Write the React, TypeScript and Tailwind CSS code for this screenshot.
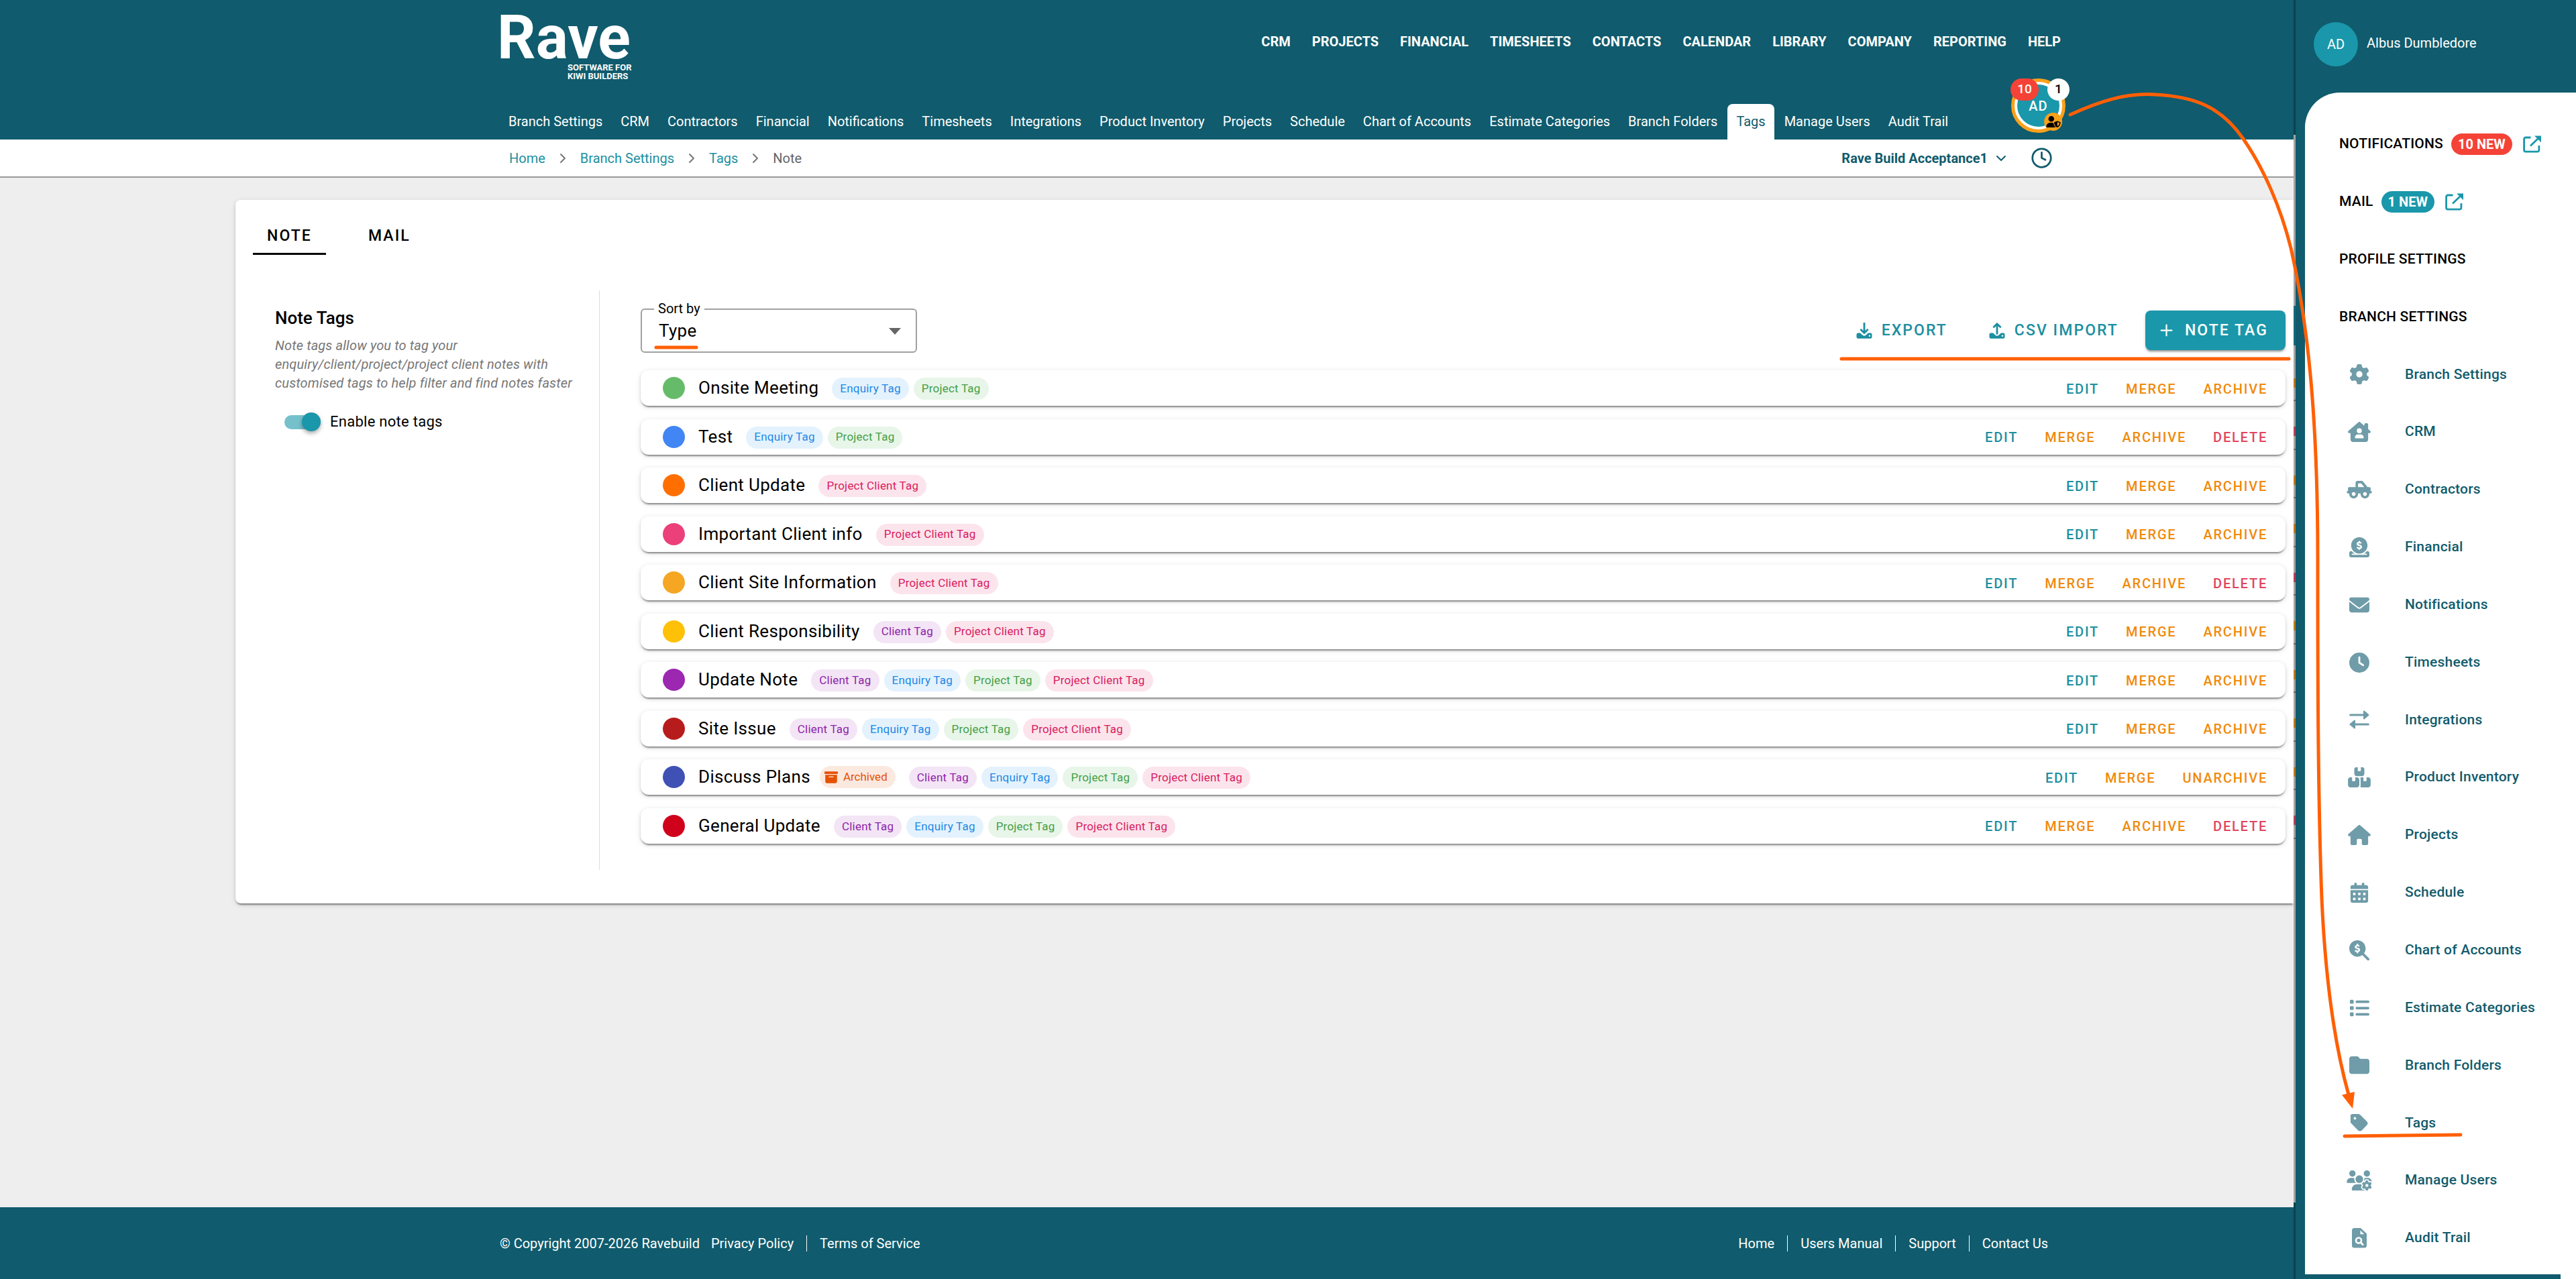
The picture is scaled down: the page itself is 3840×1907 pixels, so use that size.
import type { ReactNode } from 'react';
import { ChevronDown, ChevronRight, Clock, Plus } from 'lucide-react';
import {
  FaBoxArchive,
  FaBoxesStacked,
  FaCalendarDays,
  FaCircleDollarToSlot,
  FaClock,
  FaEnvelope,
  FaFolder,
  FaGear,
  FaHouse,
  FaHouseChimneyUser,
  FaList,
  FaMagnifyingGlassDollar,
  FaTag,
  FaTruckPickup,
  FaUserShield,
  FaUsersGear,
} from 'react-icons/fa6';

type TagType = 'client' | 'enquiry' | 'project' | 'projectClient';

interface NoteTag {
  name: string;
  dot: string;
  types: TagType[];
  archived?: boolean;
  deletable?: boolean;
}

const mainNav = ['CRM', 'PROJECTS', 'FINANCIAL', 'TIMESHEETS', 'CONTACTS', 'CALENDAR', 'LIBRARY', 'COMPANY', 'REPORTING', 'HELP'];

const subNav = [
  'Branch Settings', 'CRM', 'Contractors', 'Financial', 'Notifications', 'Timesheets', 'Integrations', 'Product Inventory',
  'Projects', 'Schedule', 'Chart of Accounts', 'Estimate Categories', 'Branch Folders', 'Tags', 'Manage Users', 'Audit Trail',
];

const tagTypes: Record<TagType, { label: string; style: string }> = {
  client: { label: 'Client Tag', style: 'bg-[#f3e5f5] text-[#8e24aa]' },
  enquiry: { label: 'Enquiry Tag', style: 'bg-[#e3f2fd] text-[#1e88e5]' },
  project: { label: 'Project Tag', style: 'bg-[#e8f5e9] text-[#43a047]' },
  projectClient: { label: 'Project Client Tag', style: 'bg-[#fce4ec] text-[#d81b60]' },
};

const allTypes: TagType[] = ['client', 'enquiry', 'project', 'projectClient'];

const noteTags: NoteTag[] = [
  { name: 'Onsite Meeting', dot: 'bg-[#66bb6a]', types: ['enquiry', 'project'] },
  { name: 'Test', dot: 'bg-[#4285f4]', types: ['enquiry', 'project'], deletable: true },
  { name: 'Client Update', dot: 'bg-[#ff6f00]', types: ['projectClient'] },
  { name: 'Important Client info', dot: 'bg-[#ec407a]', types: ['projectClient'] },
  { name: 'Client Site Information', dot: 'bg-[#f5a623]', types: ['projectClient'], deletable: true },
  { name: 'Client Responsibility', dot: 'bg-[#ffc107]', types: ['client', 'projectClient'] },
  { name: 'Update Note', dot: 'bg-[#9c27b0]', types: allTypes },
  { name: 'Site Issue', dot: 'bg-[#b71c1c]', types: allTypes },
  { name: 'Discuss Plans', dot: 'bg-[#3f51b5]', types: allTypes, archived: true },
  { name: 'General Update', dot: 'bg-[#d0021b]', types: allTypes, deletable: true },
];

function SwapIcon() {
  return (
    <svg viewBox="0 0 30 30" fill="currentColor" stroke="currentColor" strokeLinecap="round" strokeLinejoin="round">
      <path d="M1.700 8H22M8 22h20.300" strokeWidth="3.200" />
      <path d="M22 2.500v11l6.500-5.500zM8 16.500v11L1.500 22z" strokeWidth="2" />
    </svg>
  );
}

function AuditIcon() {
  return (
    <svg viewBox="0 0 22 30">
      <path fill="currentColor" d="M3.500 0H13l9 8.500V26a3.500 3.500 0 0 1-3.500 3.500h-15A3.500 3.500 0 0 1 0 26V3.500A3.500 3.500 0 0 1 3.500 0z" />
      <path fill="#fff" d="M12.500 3.500V9.200h5.800z" />
      <circle cx="10" cy="18.500" r="4" fill="none" stroke="#fff" strokeWidth="2.600" />
      <path d="m13 21.500 3.200 3.200" stroke="#fff" strokeWidth="2.800" strokeLinecap="round" />
    </svg>
  );
}

function OpenIcon() {
  return (
    <svg width="27" height="26" viewBox="0 0 27 26" fill="none" stroke="currentColor" strokeWidth="2.800">
      <path d="M11.500 3H4a2.400 2.400 0 0 0-2.400 2.400v16.400A2.400 2.400 0 0 0 4 24.200h17.500a2.400 2.400 0 0 0 2.400-2.400V15" />
      <path d="M11 15.500 22 5" />
      <path d="M17 .5h10v9.700z" fill="currentColor" stroke="none" />
    </svg>
  );
}

function TrayIcon({ up }: { up?: boolean }) {
  return (
    <svg width="24" height="24" viewBox="0 0 24 24">
      <path fill="currentColor" d="M2.800 15.500H6l3.600 3.200a3.600 3.600 0 0 0 4.800 0l3.600-3.200h3.200A2.300 2.300 0 0 1 23.500 17.800v3.700a2.300 2.300 0 0 1-2.300 2.300H2.800A2.300 2.300 0 0 1 .5 21.500v-3.700a2.300 2.300 0 0 1 2.300-2.300z" />
      <circle cx="20" cy="19.800" r="1.200" fill="#fff" />
      <path
        d={up ? 'M12 16.500V2M7.200 6.500 12 1.700l4.800 4.800' : 'M12 .8V15M7.200 10.700 12 15.500l4.800-4.800'}
        fill="none"
        stroke="currentColor"
        strokeWidth="2.800"
        strokeLinecap="round"
        strokeLinejoin="round"
      />
    </svg>
  );
}

const drawerLinks: { label: string; icon: ReactNode }[] = [
  { label: 'Branch Settings', icon: <FaGear /> },
  { label: 'CRM', icon: <FaHouseChimneyUser /> },
  { label: 'Contractors', icon: <FaTruckPickup /> },
  { label: 'Financial', icon: <FaCircleDollarToSlot /> },
  { label: 'Notifications', icon: <FaEnvelope /> },
  { label: 'Timesheets', icon: <FaClock /> },
  { label: 'Integrations', icon: <SwapIcon /> },
  { label: 'Product Inventory', icon: <FaBoxesStacked /> },
  { label: 'Projects', icon: <FaHouse /> },
  { label: 'Schedule', icon: <FaCalendarDays /> },
  { label: 'Chart of Accounts', icon: <FaMagnifyingGlassDollar /> },
  { label: 'Estimate Categories', icon: <FaList /> },
  { label: 'Branch Folders', icon: <FaFolder /> },
  { label: 'Tags', icon: <FaTag /> },
  { label: 'Manage Users', icon: <FaUsersGear /> },
  { label: 'Audit Trail', icon: <AuditIcon /> },
];

function Header() {
  return (
    <header className="flex h-[208px] flex-col bg-[#105b6d] pr-[340px] pl-[745px] text-white">
      <div className="flex h-[117px] items-start justify-between">
        <a href="#home" className="-ml-1 flex w-[199px] flex-col pt-5">
          <span className="text-[90px] leading-[74px] font-bold">Rave</span>
          <span className="w-[94px] self-end text-[13px] leading-[13px] font-bold whitespace-nowrap">
            SOFTWARE FOR
            <br />
            KIWI BUILDERS
          </span>
        </a>
        <nav className="mt-[50px] mr-[7px] flex gap-8 text-[20px] leading-6 font-bold">
          {mainNav.map((item) => (
            <a key={item} href="#main">{item}</a>
          ))}
        </nav>
      </div>
      <div className="flex flex-1 items-end justify-between">
        <nav className="flex gap-px text-[20px] leading-[53px] whitespace-nowrap">
          {subNav.map((item) => (
            <a
              key={item}
              href="#sub"
              className={item === 'Tags' ? 'mx-px rounded-t-lg bg-white px-[13px] text-[#105b6d]' : 'px-[13px]'}
            >
              {item}
            </a>
          ))}
        </nav>
        <button className="relative mb-[10px] size-[81px] rounded-full border-[5px] border-[#f9a11b] bg-white p-1">
          <span className="flex size-full items-center justify-center rounded-full bg-[#1a97aa] text-[20px] font-medium tracking-wider">AD</span>
          <span className="absolute -top-[5px] -left-[6px] flex h-[33px] w-[42px] items-center justify-center rounded-full bg-[#f44336] text-[19px] font-medium">10</span>
          <span className="absolute -top-[5px] -right-[11px] flex size-[33px] items-center justify-center rounded-full bg-white text-[19px] font-medium text-black">1</span>
          <span className="absolute right-0 -bottom-[2px] flex size-[27px] items-center justify-center rounded-full bg-[#f9a11b] text-black">
            <FaUserShield className="h-[17px] w-[22px]" />
          </span>
        </button>
      </div>
    </header>
  );
}

function Breadcrumbs() {
  return (
    <div className="flex h-[57px] items-center justify-between border-b-2 border-[#999] bg-white pr-[359px] pl-[759px] text-[20px]">
      <nav className="flex items-center gap-[14px] text-[#1c8fa1]">
        <a href="#home">Home</a>
        <ChevronRight size={24} strokeWidth={2} className="text-[#777]" />
        <a href="#branch">Branch Settings</a>
        <ChevronRight size={24} strokeWidth={2} className="text-[#777]" />
        <a href="#tags">Tags</a>
        <ChevronRight size={24} strokeWidth={2} className="text-[#777]" />
        <span className="text-[#666]">Note</span>
      </nav>
      <div className="flex items-center text-[#115b6c]">
        <button className="flex items-center gap-2 font-bold">
          Rave Build Acceptance1
          <ChevronDown size={24} strokeWidth={2} />
        </button>
        <button aria-label="Recent" className="ml-8">
          <Clock size={33} strokeWidth={2} />
        </button>
      </div>
    </div>
  );
}

function TagRow({ tag }: { tag: NoteTag }) {
  return (
    <li className="flex h-[53px] items-center rounded-xl bg-white pr-[7px] pl-[33px] shadow-[0_4px_2px_-2px_rgba(0,0,0,0.3),0_2px_3px_rgba(0,0,0,0.16),0_2px_8px_rgba(0,0,0,0.12)]">
      <span className={`size-[33px] rounded-full ${tag.dot}`}></span>
      <span className="ml-5 text-[26px] tracking-[0.0125em]">{tag.name}</span>
      {tag.archived && (
        <span className="ml-[14px] flex h-[33px] items-center gap-2 rounded-full bg-[#fbe9e0] pr-3 pl-[7px] text-[17px] text-[#e65100]">
          <FaBoxArchive size={20} />
          Archived
        </span>
      )}
      <span className="mt-[2px] ml-5 flex gap-[7px]">
        {tag.types.map((type) => (
          <span key={type} className={`flex h-[33px] items-center rounded-full px-3 text-[17px] tracking-[0.0125em] ${tagTypes[type].style}`}>
            {tagTypes[type].label}
          </span>
        ))}
      </span>
      <span className="mt-[2px] ml-auto flex text-[20px] font-medium tracking-[0.09em] text-[#f08a0c]">
        <button className="px-5 text-[#1c8fa1]">EDIT</button>
        <button className="px-5">MERGE</button>
        <button className="px-5">{tag.archived ? 'UNARCHIVE' : 'ARCHIVE'}</button>
        {tag.deletable && <button className="px-5 text-[#e0455e]">DELETE</button>}
      </span>
    </li>
  );
}

function NoteTagsCard() {
  return (
    <section className="mt-[33px] ml-[351px] rounded-l-lg bg-white pt-[22px] pb-[50px] shadow-[0_4px_2px_-2px_rgba(0,0,0,0.3),0_2px_3px_rgba(0,0,0,0.16),0_2px_8px_rgba(0,0,0,0.12)]">
      <div role="tablist" className="ml-[26px] flex gap-[42px] text-[23px] leading-[51px] font-medium tracking-[0.09em]">
        <button role="tab" aria-selected="true" className="border-b-3 border-black px-[21px] pt-[6px]">NOTE</button>
        <button role="tab" aria-selected="false" className="border-b-3 border-transparent px-[21px] pt-[6px]">MAIL</button>
      </div>
      <div className="mt-[53px] flex">
        <div className="w-[543px] border-r border-[#ddd] pt-6 pl-[59px]">
          <h2 className="text-[26px] leading-[34px] font-medium">Note Tags</h2>
          <p className="mt-[10px] text-[20px] leading-7 tracking-[0.007em] whitespace-nowrap text-[#777] italic">
            Note tags allow you to tag your
            <br />
            enquiry/client/project/project client notes with
            <br />
            customised tags to help filter and find notes faster
          </p>
          <label className="mt-[30px] ml-[14px] flex items-center text-[22px] leading-7 tracking-[0.0125em]">
            <input type="checkbox" defaultChecked className="peer sr-only" />
            <span className="mr-[14px] flex h-[21px] w-[54px] items-center justify-end rounded-full bg-[#76c0cc]">
              <span className="size-7 rounded-full bg-[#1a97aa] shadow-[0_3px_6px_rgba(0,0,0,0.35)]"></span>
            </span>
            Enable note tags
          </label>
        </div>
        <div className="flex-1 pr-3 pl-[61px]">
          <div className="flex items-start justify-between pt-[27px]">
            <div className="relative w-[412px]">
              <label htmlFor="sort" className="absolute -top-3 left-5 bg-white px-[6px] text-[20px] leading-6">Sort by</label>
              <select id="sort" className="h-[66px] w-full appearance-none rounded-md border-2 border-[#a0a0a0] bg-white px-[25px] text-[26px] tracking-[0.0125em]">
                <option>Type</option>
                <option>Name</option>
              </select>
              <svg width="18" height="10" viewBox="0 0 18 10" className="pointer-events-none absolute top-[29px] right-[24px]">
                <path d="M0 0h18l-9 10z" fill="#666" />
              </svg>
            </div>
            <div className="mt-[3px] flex gap-[18px] text-[23px] leading-[59px] font-medium tracking-[0.09em] text-[#1c8fa1]">
              <button className="flex items-center gap-[14px] px-[22px]">
                <TrayIcon />
                EXPORT
              </button>
              <button className="flex items-center gap-[14px] px-[22px]">
                <TrayIcon up />
                CSV IMPORT
              </button>
              <button className="flex items-center gap-[14px] rounded-lg bg-[#1a97aa] pr-[26px] pl-[18px] text-white shadow-[0_4px_3px_-2px_rgba(0,0,0,0.3),0_2px_4px_rgba(0,0,0,0.2)]">
                <Plus size={27} strokeWidth={2} />
                NOTE TAG
              </button>
            </div>
          </div>
          <ul className="mt-[26px] mb-[39px] flex min-h-[706px] flex-col justify-between">
            {noteTags.map((tag) => (
              <TagRow key={tag.name} tag={tag} />
            ))}
          </ul>
        </div>
      </div>
    </section>
  );
}

function Footer() {
  return (
    <footer className="mt-auto flex h-[107px] items-center bg-[#105b6d] pr-[366px] pl-[745px] text-[20px] leading-6 text-white">
      <span>© Copyright 2007-2026 Ravebuild</span>
      <a href="#privacy" className="ml-[17px] border-r border-white pr-[19px]">Privacy Policy</a>
      <a href="#terms" className="ml-[19px]">Terms of Service</a>
      <nav className="ml-auto flex">
        <a href="#home" className="border-r border-white pr-[19px]">Home</a>
        <a href="#manual" className="border-r border-white px-[19px]">Users Manual</a>
        <a href="#support" className="border-r border-white px-[19px]">Support</a>
        <a href="#contact" className="pl-[19px]">Contact Us</a>
      </nav>
    </footer>
  );
}

// Sliver of the dimmed page that stays visible beside the open drawer
function DimmedEdge() {
  return (
    <div aria-hidden="true" className="flex w-[3px] shrink-0 flex-col bg-[#a3a3a3]">
      <div className="h-[201px] bg-[#0a4350]"></div>
      <div className="mt-[255px] h-[59px] bg-[#12697a]"></div>
      <div className="mt-[30px] flex h-[706px] flex-col justify-between">
        {noteTags.map((tag) => (
          <div key={tag.name} className="flex h-[53px] flex-col justify-center border-b-2 border-[#6b6b6b]">
            <div className={tag.deletable ? 'h-[14px] bg-[#b0405a]' : 'h-[14px] bg-[#b8791f]'}></div>
          </div>
        ))}
      </div>
      <div className="mt-auto h-[114px] bg-[#0a4350]"></div>
    </div>
  );
}

function ProfileDrawer() {
  return (
    <aside className="flex w-[418px] shrink-0 flex-col bg-[#105b6d] text-[21px] tracking-[0.01em]">
      <div className="flex h-[138px] items-start gap-[13px] pt-[33px] pl-[27px] text-white">
        <span className="flex size-[66px] items-center justify-center rounded-full bg-[#1a97aa] text-[20px] tracking-normal">AD</span>
        <span className="mt-[19px] text-[20px] leading-6 tracking-normal">Albus Dumbledore</span>
      </div>
      <div className="ml-[14px] flex flex-1 flex-col rounded-tl-[52px] bg-white pt-[34px] pb-[11px] font-medium text-[#115b6c]">
        <div className="flex flex-1 items-center gap-3 pl-[51px] text-black">
          NOTIFICATIONS
          <span className="rounded-full bg-[#f44336] px-[10px] text-[20px] leading-8 font-bold tracking-normal text-white">10 NEW</span>
          <a href="#notifications" aria-label="Open notifications" className="ml-1 text-[#1a97aa]">
            <OpenIcon />
          </a>
        </div>
        <div className="flex flex-1 items-center gap-3 pl-[51px] text-black">
          MAIL
          <span className="rounded-full bg-[#1a97aa] px-[10px] text-[20px] leading-8 font-bold tracking-normal text-white">1 NEW</span>
          <a href="#mail" aria-label="Open mail" className="ml-1 text-[#1a97aa]">
            <OpenIcon />
          </a>
        </div>
        <a href="#profile" className="flex flex-1 items-center pl-[51px] text-black">PROFILE SETTINGS</a>
        <a href="#branch" className="flex flex-1 items-center pl-[51px] text-black">BRANCH SETTINGS</a>
        {drawerLinks.map((link) => (
          <a key={link.label} href="#settings" className="flex flex-1 items-center pl-[61px]">
            <span className="flex w-10 justify-center text-[#6f9ca8] [&>svg]:h-[30px] [&>svg]:w-[38px]">{link.icon}</span>
            <span className="ml-12">{link.label}</span>
          </a>
        ))}
      </div>
      <div className="h-[7px] border-r-[23px] border-white"></div>
    </aside>
  );
}

// Hand-drawn callouts that sit over the page
function Annotations() {
  return (
    <svg width="3840" height="1907" viewBox="0 0 3840 1907" className="pointer-events-none absolute top-0 left-0" fill="none" stroke="#ff5f05" strokeWidth="5" strokeLinecap="round">
      <path d="M3086 171C3130 151 3170 138 3213 141C3270 144 3310 158 3344 207C3375 252 3400 310 3415 370C3440 480 3455 620 3455 830C3455 1000 3455 1180 3461 1340C3466 1450 3478 1550 3501 1632" />
      <path d="M3491 1632.500 3510 1628 3507 1653z" fill="#ff5f05" stroke="none" />
      <path d="M978 518h60M2745 535h667M3495 1694l173-2" />
    </svg>
  );
}

export default function App() {
  return (
    <div className="relative flex min-h-screen overflow-hidden bg-[#eee] font-[Roboto,sans-serif] text-black">
      <main className="flex min-w-0 flex-1 flex-col overflow-hidden">
        <Header />
        <Breadcrumbs />
        <NoteTagsCard />
        <Footer />
      </main>
      <DimmedEdge />
      <ProfileDrawer />
      <Annotations />
    </div>
  );
}
